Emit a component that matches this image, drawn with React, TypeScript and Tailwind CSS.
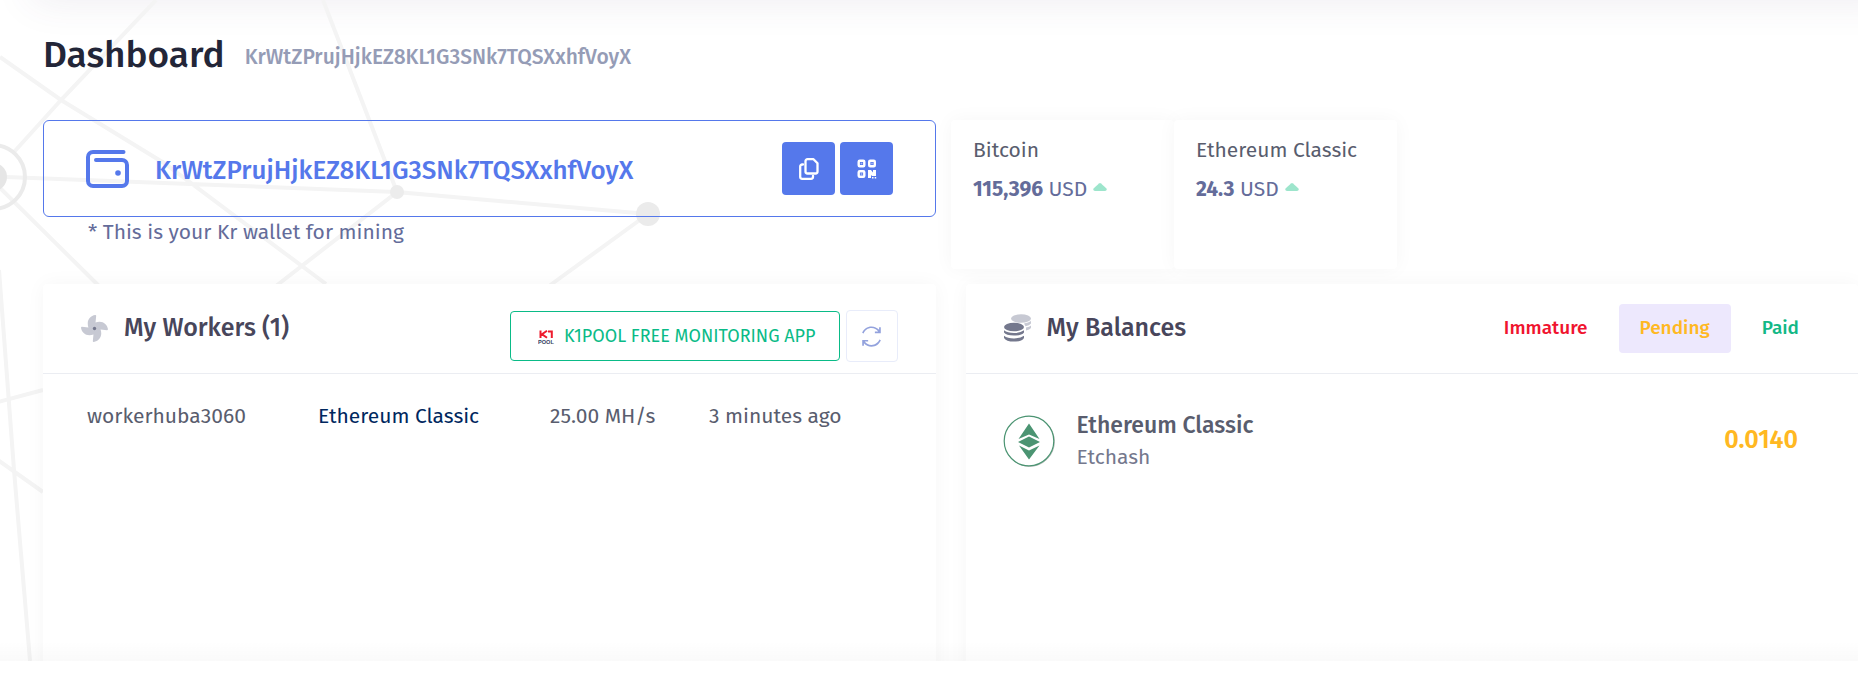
import React, { ReactNode } from "react";
import { LiaSyncSolid } from "react-icons/lia";

const WALLET = "KrWtZPrujHjkEZ8KL1G3SNk7TQSXxhfVoyX";

function NetworkBackdrop() {
  return (
    <svg className="absolute left-0 top-0 -z-10" width="700" height="661" fill="none" stroke="#f4f4f4" strokeWidth="4" aria-hidden="true">
      <path d="M156 0 L61 100 L14 152 M0 57 L61 100 L164 163 L326 284 M323 0 L397 192 L648 214 M6 177 L397 192 L276 286 M648 214 L549 286 M0 188 L99 286" />
      <path d="M-1 270 L14 470 L30 661 M-2 402 L43 390 M-2 460 L43 492" />
      <circle cx="-7" cy="177" r="32" stroke="#ebebeb" />
      <circle cx="-7" cy="177" r="14" fill="#e6e6e6" stroke="none" />
      <circle cx="397" cy="192" r="7" fill="#ececec" stroke="none" />
      <circle cx="648" cy="214" r="12" fill="#ebebeb" stroke="none" />
    </svg>
  );
}

function WalletIcon() {
  return (
    <svg width="43" height="38" viewBox="0 0 43 38" fill="none" stroke="#5578eb" strokeWidth="4" strokeLinecap="round" strokeLinejoin="round" aria-hidden="true">
      <path d="M37.500 2H7a5 5 0 0 0-5 5v24a5 5 0 0 0 5 5h29a5 5 0 0 0 5-5V15a5 5 0 0 0-5-5H10" />
      <circle cx="32" cy="23" r="2.800" fill="#5578eb" stroke="none" />
    </svg>
  );
}

function CopyIcon() {
  return (
    <svg width="20" height="22" viewBox="0 0 20 22" fill="none" stroke="#fff" strokeWidth="2.300" strokeLinejoin="round" aria-hidden="true">
      <path d="M8.500 1.200h6l4 4v8.300a2 2 0 0 1-2 2h-8a2 2 0 0 1-2-2V3.200a2 2 0 0 1 2-2z" />
      <path d="M4 6.500H3.200a2 2 0 0 0-2 2V18.800a2 2 0 0 0 2 2h8.800a2 2 0 0 0 2-2v-1" strokeLinecap="round" />
    </svg>
  );
}

function QrIcon() {
  return (
    <svg width="20" height="20" viewBox="0 0 20 20" fill="none" stroke="#fff" strokeWidth="2.400" aria-hidden="true">
      <rect x="1.700" y="1.700" width="5.600" height="5.600" rx="1" />
      <rect x="12.200" y="1.700" width="5.600" height="5.600" rx="1" />
      <rect x="1.700" y="12.200" width="5.600" height="5.600" rx="1" />
      <path d="M3.700 3.700h1.600v1.600H3.700zM14.200 3.700h1.600v1.600h-1.600zM3.700 14.200h1.600v1.600H3.700z" fill="#fff" stroke="none" opacity=".5" />
      <path d="M11 11h3l2 2.500V11h3v6h-4l-1-1v3h-3zM15 18h1.500v1.500H15zM17.700 18h1.500v1.500h-1.500z" fill="#fff" stroke="none" />
    </svg>
  );
}

function FanIcon() {
  return (
    <svg className="shrink-0" width="27" height="27" viewBox="0 0 512 512" aria-hidden="true">
      <path fill="#c7c9d3" d="M352.570 128c-28.090 0-54.090 4.520-77.060 12.860l12.410-123.110C289 7.310 279.810-1.180 269.330.130 189.630 10.130 128 77.640 128 159.430c0 28.090 4.520 54.090 12.860 77.060L17.750 224.080C7.310 223-1.180 232.190.130 242.670c10 79.700 77.510 141.330 159.300 141.330 28.090 0 54.090-4.520 77.060-12.860l-12.410 123.110c-1.050 10.430 8.110 18.930 18.590 17.620 79.700-10 141.330-77.510 141.330-159.300 0-28.090-4.520-54.090-12.860-77.060l123.110 12.410c10.440 1.050 18.930-8.110 17.620-18.590-10-79.700-77.510-141.330-159.300-141.330z" />
      <circle cx="256" cy="256" r="32" fill="#74788d" />
    </svg>
  );
}

function CoinsIcon() {
  return (
    <svg className="shrink-0" width="27" height="28" viewBox="0 0 27 28" aria-hidden="true">
      <g fill="#c7c9d3">
        <ellipse cx="17" cy="4.500" rx="10" ry="4.300" />
        <path d="M20 9.500q4.500-.6 7-2.500v2.500q-1.500 2-5.500 2.800zM22 13.600q3.500-.8 5-2.200v2.500q-1.200 1.600-5 2.500z" />
      </g>
      <g fill="#74788d">
        <ellipse cx="10" cy="13" rx="10" ry="4.300" />
        <path d="M0 16.300q3.500 2.700 10 2.700t10-2.700v2.200q-2 3-10 3t-10-3zM0 21.700q3.500 2.700 10 2.700t10-2.700v2.200q-2 3.700-10 3.700t-10-3.700z" />
      </g>
    </svg>
  );
}

function K1Logo() {
  return (
    <svg width="17" height="15" viewBox="0 0 17 15" aria-hidden="true">
      <path d="M2.500 1.500v7.500M9 1.700L4 5.200 9 8.800M10 2.500H13.800V9" stroke="#ee1c2e" strokeWidth="2" fill="none" />
      <text x="0" y="14.500" fontSize="5.600" fontWeight="700" fill="#33415e" fontFamily="Liberation Sans, sans-serif">POOL</text>
    </svg>
  );
}

function EtcLogo() {
  return (
    <svg className="shrink-0" width="52" height="52" viewBox="0 0 52 52" aria-hidden="true">
      <circle cx="26.600" cy="26.600" r="24.800" fill="none" stroke="#bbb" strokeWidth="1" />
      <circle cx="26" cy="26" r="24.800" fill="#fff" stroke="#4b9472" strokeWidth="1.200" />
      <g fill="#4b9472">
        <path d="M26 8.500L36.500 24 26 19.500 15.500 24z" />
        <path d="M26 21.500L37 27 26 32.500 15 27z" />
        <path d="M16 30.500L26 35.500 36.500 30.500 26 44.500z" />
      </g>
    </svg>
  );
}

function PriceCard({ name, price }: { name: string; price: string }) {
  return (
    <section className="h-[149px] min-w-[223px] rounded bg-white pl-[22px] pr-10 pt-[14px] shadow-[0_0_20px_rgba(0,0,0,0.04)]">
      <h2 className="text-[21px] leading-8 text-[#595d6e]">{name}</h2>
      <p className="flex items-center text-[21px] leading-[46px] text-[#646c9a]">
        <span><b className="font-bold">{price}</b> USD</span>
        <svg className="mb-1 ml-[6px]" width="14" height="8" viewBox="0 0 14 8" aria-hidden="true">
          <path d="M6 .5q1-.8 2 0l5.500 5q.8 2.500-1.500 2.500H2Q-.3 8 .5 5.500z" fill="#9de5cc" />
        </svg>
      </p>
    </section>
  );
}

function Panel({ icon, title, actions, children }: { icon: ReactNode; title: string; actions: ReactNode; children: ReactNode }) {
  return (
    <section className="min-w-0 flex-1 rounded bg-white shadow-[0_0_20px_rgba(0,0,0,0.04)]">
      <header className="flex h-[90px] items-start justify-between border-b border-[#ebedf2] px-[38px]">
        <div className="flex items-center gap-4 pt-6">
          {icon}
          <h2 className="text-[25px] font-medium leading-10 text-[#48465b]">{title}</h2>
        </div>
        {actions}
      </header>
      {children}
    </section>
  );
}

const tabs = [
  { label: "Immature", style: "text-[#f0142f]" },
  { label: "Pending", style: "bg-[#ede8fd] text-[#ffb822]" },
  { label: "Paid", style: "text-[#12b886]" },
];

export default function App() {
  return (
    <div className="min-h-screen overflow-hidden bg-white font-['Fira_Sans','Noto_Sans',sans-serif]">
      <div className="relative isolate h-[661px] overflow-hidden">
        <div className="absolute -right-10 -top-10 left-8 -z-20 h-10 shadow-[0_0_40px_rgba(82,63,105,0.1)]" />
        <NetworkBackdrop />
        <div className="absolute inset-x-0 bottom-0 h-5 bg-linear-to-b from-transparent to-black/2" />
        <div className="pl-[43px]">
          <header className="flex items-center gap-5 pt-[30px]">
            <h1 className="text-[37px] font-medium leading-[50px] text-[#232638]">Dashboard</h1>
            <span className="pt-[6px] text-[21px] font-medium text-[#959cb6]">{WALLET}</span>
          </header>
          <div className="mt-10 flex items-start gap-[15px]">
            <div className="w-[893px]">
              <div className="flex h-[97px] items-center rounded-md border border-[#5578eb] px-[42px]">
                <WalletIcon />
                <strong className="ml-[26px] flex-1 pt-1 text-[26px] font-medium text-[#5578eb]">{WALLET}</strong>
                <div className="flex gap-[5px]">
                  <button aria-label="Copy" className="flex size-[53px] items-center justify-center rounded bg-[#5578eb]"><CopyIcon /></button>
                  <button aria-label="QR code" className="flex size-[53px] items-center justify-center rounded bg-[#5578eb]"><QrIcon /></button>
                </div>
              </div>
              <p className="pl-[45px] text-[21px] leading-[30px] text-[#646c9a]">* This is your Kr wallet for mining</p>
            </div>
            <div className="flex">
              <PriceCard name="Bitcoin" price="115,396" />
              <PriceCard name="Ethereum Classic" price="24.3" />
            </div>
          </div>
          <div className="mt-[15px] flex h-[500px] gap-[30px]">
            <Panel
              icon={<FanIcon />}
              title="My Workers (1)"
              actions={
                <div className="flex items-center gap-[6px] pt-[26px]">
                  <a href="#app" className="flex h-[50px] items-center gap-[9px] rounded border border-[#0abb87] pl-[27px] pr-[23px] text-[18px] text-[#0abb87]">
                    <K1Logo />
                    K1POOL FREE MONITORING APP
                  </a>
                  <button aria-label="Refresh" className="flex size-[52px] items-center justify-center rounded border border-[#e8ecfa] text-[#93a2dd]"><LiaSyncSolid size={27} /></button>
                </div>
              }
            >
              <table className="mt-[25px] text-left text-[21px] leading-[34px] text-[#595d6e]">
                <tbody>
                  <tr>
                    <td className="w-[275px] pl-11">workerhuba3060</td>
                    <td className="w-[232px] text-[#00275e]">Ethereum Classic</td>
                    <td className="w-[159px]">25.00 MH/s</td>
                    <td>3 minutes ago</td>
                  </tr>
                </tbody>
              </table>
            </Panel>
            <Panel
              icon={<CoinsIcon />}
              title="My Balances"
              actions={
                <nav className="flex gap-[10px] pt-5">
                  {tabs.map((t) => (
                    <button key={t.label} className={`h-[49px] rounded px-[21px] text-[19px] font-medium ${t.style}`}>{t.label}</button>
                  ))}
                </nav>
              }
            >
              <div className="flex items-center gap-[22px] pl-[37px] pr-[60px] pt-[35px]">
                <EtcLogo />
                <div className="flex-1">
                  <h3 className="text-[23px] font-medium leading-8 text-[#595d6e]">Ethereum Classic</h3>
                  <p className="text-[21px] leading-8 text-[#74788d]">Etchash</p>
                </div>
                <strong className="text-[25px] font-semibold text-[#ffb822]">0.0140</strong>
              </div>
            </Panel>
          </div>
        </div>
      </div>
      <footer className="h-[31px] bg-white" />
    </div>
  );
}
